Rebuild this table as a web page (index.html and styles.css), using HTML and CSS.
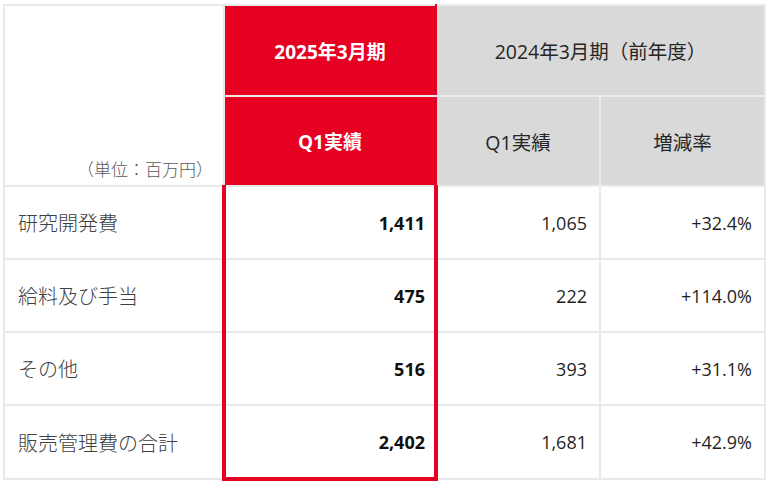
FILE: index.html
```html
<!DOCTYPE html>
<html lang="ja">
<head>
<meta charset="utf-8">
<title>販売管理費</title>
<link rel="stylesheet" href="styles.css">
</head>
<body>
<table class="sga">
  <colgroup>
    <col class="c-label">
    <col class="c-cur">
    <col class="c-prev">
    <col class="c-rate">
  </colgroup>
  <thead>
    <tr class="h1">
      <th class="unit" rowspan="2">（単位：百万円）</th>
      <th class="red">2025年3月期</th>
      <th class="gray" colspan="2">2024年3月期（前年度）</th>
    </tr>
    <tr class="h2">
      <th class="red">Q1実績</th>
      <th class="gray">Q1実績</th>
      <th class="gray">増減率</th>
    </tr>
  </thead>
  <tbody>
    <tr>
      <td class="label">研究開発費</td>
      <td class="cur">1,411</td>
      <td class="num">1,065</td>
      <td class="num">+32.4%</td>
    </tr>
    <tr>
      <td class="label">給料及び手当</td>
      <td class="cur">475</td>
      <td class="num">222</td>
      <td class="num">+114.0%</td>
    </tr>
    <tr>
      <td class="label">その他</td>
      <td class="cur">516</td>
      <td class="num">393</td>
      <td class="num">+31.1%</td>
    </tr>
    <tr class="last">
      <td class="label">販売管理費の合計</td>
      <td class="cur">2,402</td>
      <td class="num">1,681</td>
      <td class="num">+42.9%</td>
    </tr>
  </tbody>
</table>
</body>
</html>
```

FILE: styles.css
```css
html, body {
  margin: 0;
  padding: 0;
  background: #ffffff;
}

body {
  font-family: "Open Sans", "Noto Sans CJK JP", sans-serif;
  color: #262626;
}

.sga {
  margin: 4px 0 0 3px;
  border-collapse: collapse;
  table-layout: fixed;
  width: 761px;
}

.c-label { width: 220px; }
.c-cur { width: 212px; }
.c-prev { width: 164px; }
.c-rate { width: 165px; }

.sga th,
.sga td {
  border: 2px solid #e9e9e9;
  padding: 0 12px;
}

.h1 th { height: 89px; }
.h2 th { height: 88px; }
.sga tbody td { height: 71px; }

.sga th {
  font-size: 19.5px;
  font-weight: 400;
  text-align: center;
  vertical-align: middle;
}

.sga th.unit {
  background: #ffffff;
  text-align: right;
  vertical-align: bottom;
  font-size: 17px;
  font-weight: 300;
  color: #595959;
  padding: 0 10px 4px 0;
}

.sga th.red {
  background: #e60021;
  color: #ffffff;
  font-weight: 700;
  font-size: 19px;
  border-left-color: #e60021;
  border-right-color: #e60021;
}

.sga th.gray {
  background: #d9d9d9;
  color: #262626;
  border-color: #ececec;
}

.sga td.label {
  font-size: 20px;
  font-weight: 300;
  color: #404040;
  padding-left: 13px;
}

.sga td.cur,
.sga td.num {
  font-size: 18px;
  text-align: right;
  color: #1f1f1f;
}

.sga td.cur {
  font-weight: 700;
  color: #111111;
  border-left: 4px solid #e60021;
  border-right: 4px solid #e60021;
  padding-right: 9px;
}

.sga tr.last td.cur {
  border-bottom: 4px solid #e60021;
}
```
